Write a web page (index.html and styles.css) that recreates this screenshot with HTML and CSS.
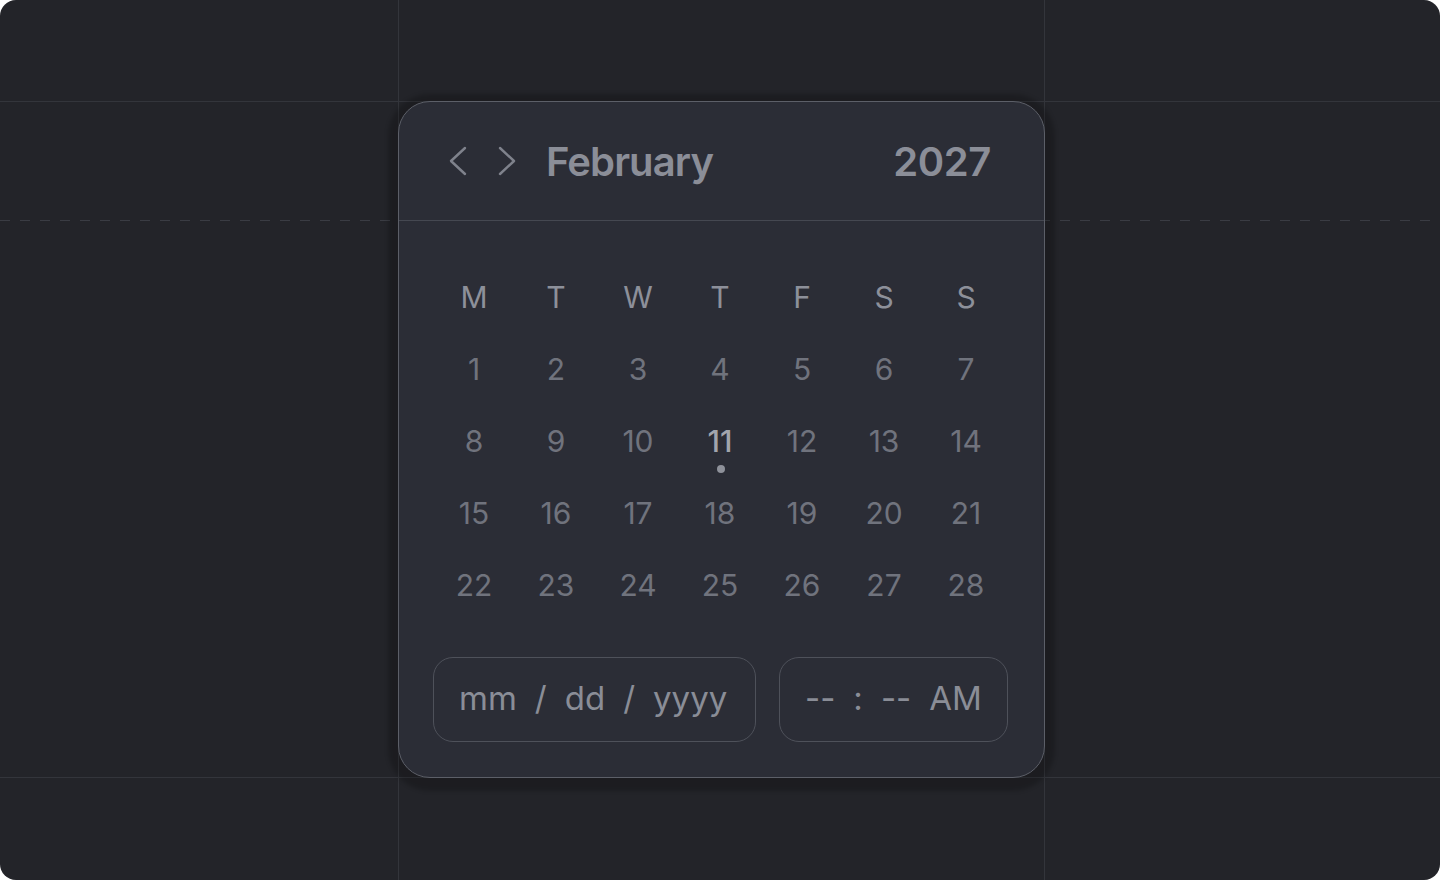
FILE: index.html
```html
<!DOCTYPE html>
<html lang="en">
<head>
  <meta charset="UTF-8">
  <meta name="viewport" content="width=device-width, initial-scale=1.0">
  <title>Date Picker</title>
  <link rel="stylesheet" href="styles.css">
</head>
<body>
  <div class="frame">
    <section class="picker">
      <header class="picker-head">
        <button class="nav" aria-label="Previous month">
          <svg width="20" height="30" viewBox="0 0 20 30"><path d="M17 2 L3 15 L17 28" /></svg>
        </button>
        <button class="nav" aria-label="Next month">
          <svg width="20" height="30" viewBox="0 0 20 30"><path d="M3 2 L17 15 L3 28" /></svg>
        </button>
        <h1 class="month">February</h1>
        <span class="year">2027</span>
      </header>

      <div class="picker-body">
        <div class="grid weekdays">
          <span>M</span><span>T</span><span>W</span><span>T</span><span>F</span><span>S</span><span>S</span>
        </div>
        <div class="grid days">
          <span>1</span><span>2</span><span>3</span><span>4</span><span>5</span><span>6</span><span>7</span>
          <span>8</span><span>9</span><span>10</span><span class="today">11</span><span>12</span><span>13</span><span>14</span>
          <span>15</span><span>16</span><span>17</span><span>18</span><span>19</span><span>20</span><span>21</span>
          <span>22</span><span>23</span><span>24</span><span>25</span><span>26</span><span>27</span><span>28</span>
        </div>

        <div class="fields">
          <div class="field date-field">
            <span>mm</span><span>/</span><span>dd</span><span>/</span><span>yyyy</span>
          </div>
          <div class="field time-field">
            <span>--</span><span>:</span><span>--</span><span>AM</span>
          </div>
        </div>
      </div>
    </section>
  </div>
</body>
</html>
```

FILE: styles.css
```css
* {
  margin: 0;
  padding: 0;
  box-sizing: border-box;
}

body {
  background: #ffffff;
  font-family: Inter, "Noto Sans", sans-serif;
}

.frame {
  width: 1440px;
  height: 880px;
  border-radius: 16px;
  overflow: hidden;
  padding: 101px 0 0 398px;
  background:
    linear-gradient(#33353b, #33353b) 0 101px / 100% 1px no-repeat,
    linear-gradient(#33353b, #33353b) 0 777px / 100% 1px no-repeat,
    linear-gradient(#33353b, #33353b) 398px 0 / 1px 100% no-repeat,
    linear-gradient(#33353b, #33353b) 1044px 0 / 1px 100% no-repeat,
    repeating-linear-gradient(90deg, #3a3c43 0 10px, transparent 10px 20px) 0 220px / 100% 1px no-repeat,
    #232429;
}

.picker {
  width: 647px;
  height: 677px;
  background: #2b2d36;
  border: 1.5px solid #5c5f68;
  border-radius: 32px;
  box-shadow: 0 3px 4px 10px rgba(0, 0, 0, 0.2);
  display: flex;
  flex-direction: column;
}

.picker-head {
  height: 119px;
  border-bottom: 1px solid #454851;
  display: flex;
  align-items: center;
  padding: 0 53px 0 48px;
}

.nav {
  background: none;
  border: none;
  width: 22px;
  height: 32px;
  display: flex;
  align-items: center;
  justify-content: center;
  margin-right: 27px;
  cursor: pointer;
}

.nav path {
  fill: none;
  stroke: #7f828c;
  stroke-width: 2.4;
  stroke-linecap: round;
  stroke-linejoin: round;
}

.month {
  flex: 1;
  font-size: 40px;
  font-weight: 600;
  letter-spacing: -0.9px;
  color: #8b8e98;
  margin-left: 1px;
}

.year {
  font-size: 40px;
  font-weight: 600;
  letter-spacing: -0.4px;
  color: #8b8e98;
}

.picker-body {
  padding: 40px 34px 0 34px;
}

.grid {
  display: grid;
  grid-template-columns: repeat(7, 82px);
  grid-auto-rows: 72px;
}

.grid span {
  display: flex;
  align-items: center;
  justify-content: center;
}

.weekdays span {
  font-size: 30px;
  font-weight: 400;
  color: #8d909a;
}

.days span {
  font-size: 30px;
  font-weight: 400;
  color: #70737d;
}

.days .today {
  position: relative;
  color: #a2a5ad;
  font-weight: 500;
}

.days .today::after {
  content: "";
  position: absolute;
  left: 50%;
  top: 60px;
  width: 8px;
  height: 8px;
  margin-left: -3px;
  border-radius: 50%;
  background: #8e919a;
}

.fields {
  display: flex;
  gap: 23px;
  margin-top: 36px;
}

.field {
  height: 85px;
  border: 1.5px solid #4e515a;
  border-radius: 20px;
  display: flex;
  align-items: center;
  padding-bottom: 4px;
  font-size: 33px;
  color: #8a8d97;
}

.date-field {
  width: 323px;
  padding-left: 25px;
  gap: 18px;
}

.time-field {
  width: 229px;
  padding-left: 25px;
  gap: 18px;
}
```
